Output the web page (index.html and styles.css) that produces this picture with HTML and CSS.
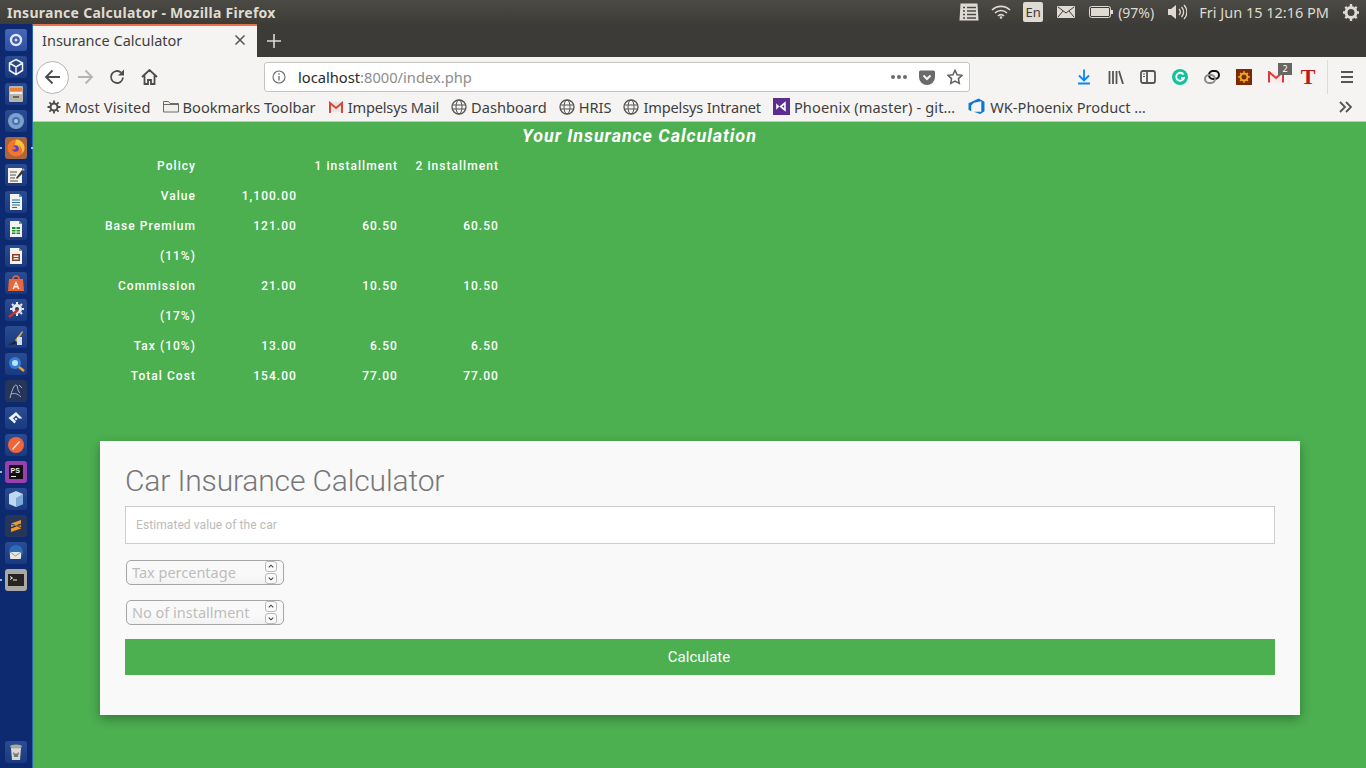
FILE: index.html
```html
<!DOCTYPE html>
<html lang="en">
<head>
  <meta charset="UTF-8">
  <title>Insurance Calculator</title>
  <link rel="stylesheet" href="styles.css">
</head>
<body>
  <div class="panel">
    <div class="panel-title">Insurance Calculator - Mozilla Firefox</div>
    <div class="panel-tray">
      <svg class="tray-icon" width="20" height="18" viewBox="0 0 20 18"><path d="M1.500 0.500h17l1 17H0.500z" fill="#dfdbd2"/><path d="M4 4.500h2M8 4.500h9M4 8h2M8 8h9M4 11.500h2M8 11.500h9M4 15h2M8 15h9" stroke="#4a4944" stroke-width="1.500"/></svg>
      <svg class="tray-icon" width="20" height="14" viewBox="0 0 20 14"><path d="M1 5a13 13 0 0 1 18 0M4 8a8.500 8.500 0 0 1 12 0M7 11a4 4 0 0 1 6 0" fill="none" stroke="#dfdbd2" stroke-width="1.600"/><circle cx="10" cy="12.500" r="1.300" fill="#dfdbd2"/></svg>
      <span class="lang-badge">En</span>
      <svg class="tray-icon tray-mail" width="18" height="12" viewBox="0 0 18 12"><rect width="18" height="12" rx="1" fill="#dfdbd2"/><path d="M1 1l8 6 8-6M1 11l5-6M17 11l-5-6" fill="none" stroke="#3c3b37" stroke-width="1"/></svg>
      <svg class="tray-icon battery" width="24" height="12" viewBox="0 0 24 12"><rect x="0.500" y="0.500" width="21" height="11" rx="2" fill="#3c3b37" stroke="#dfdbd2"/><rect x="2" y="2" width="18" height="8" fill="#dfdbd2"/><rect x="22" y="4" width="2" height="4" fill="#dfdbd2"/></svg>
      <span class="tray-text percent">(97%)</span>
      <svg class="tray-icon" width="20" height="16" viewBox="0 0 20 16"><path d="M1 5h3l5-4v14l-5-4H1z" fill="#dfdbd2"/><path d="M12 5a4 4 0 0 1 0 6M14.500 3a7 7 0 0 1 0 10M17 1a10 10 0 0 1 0 14" fill="none" stroke="#dfdbd2" stroke-width="1.300"/></svg>
      <span class="tray-text clock">Fri Jun 15 12:16 PM</span>
      <svg class="tray-icon" width="18" height="18" viewBox="0 0 18 18"><circle cx="9" cy="9.500" r="5" fill="none" stroke="#dfdbd2" stroke-width="3"/><path d="M9 1v3.500M9 14.500V18M1 9.500h3M14 9.500h3M3.300 3.800l2.200 2.200M14.700 3.800l-2.200 2.200M3.300 15.200l2.200-2.200M14.700 15.200l-2.200-2.200" stroke="#dfdbd2" stroke-width="2.400"/></svg>
    </div>
  </div>

  <div class="desktop">
    <div class="launcher">
      <div class="launcher-list">
        <div class="tile tile-bright"><svg width="16" height="16" viewBox="0 0 16 16"><circle cx="8" cy="8" r="5" fill="none" stroke="#dfe5f4" stroke-width="2.400"/><circle cx="8" cy="8" r="1.500" fill="#dfe5f4"/></svg></div>
        <div class="tile"><svg width="18" height="18" viewBox="0 0 18 18"><path d="M9 1.500l6.500 3.500v7.500L9 16.500l-6.500-4V5zM2.500 5L9 9l6.500-4M9 9v7.500" fill="none" stroke="#f0f0f0" stroke-width="1.500"/></svg></div>
        <div class="tile"><svg width="18" height="18" viewBox="0 0 18 18"><rect x="2" y="1" width="14" height="16" rx="1" fill="#b9b5ad"/><rect x="3" y="3" width="12" height="3" fill="#e9803a"/><rect x="3" y="7" width="12" height="2" fill="#f2efe8"/><rect x="6" y="11" width="6" height="2" fill="#6c6860"/></svg></div>
        <div class="tile"><svg width="18" height="18" viewBox="0 0 18 18"><circle cx="9" cy="9" r="8" fill="#7f9ec8"/><circle cx="9" cy="9" r="4" fill="#3f74bd"/><circle cx="9" cy="9" r="2" fill="#a9c6e6"/></svg></div>
        <div class="tile tile-active"><span class="pip pip-left"></span><span class="pip pip-right"></span><svg width="18" height="18" viewBox="0 0 18 18"><circle cx="9" cy="9" r="8.500" fill="#f5752b"/><path d="M9 .5a8.500 8.500 0 0 1 8.500 8.500c0 2-1 4-2.500 5.500 1-4-1-7.500-4-8.500l2 3H7L9 .5z" fill="#fcc13a"/><circle cx="8.500" cy="9.500" r="3.300" fill="#5b3fc9"/><path d="M5 7c2 0 3 1 4 2-1 2-2 2-4 1z" fill="#f5752b"/></svg></div>
        <div class="tile"><svg width="18" height="18" viewBox="0 0 18 18"><rect x="1" y="2" width="14" height="15" fill="#f3f1ea"/><path d="M3 6h7M3 9h6M3 12h5M3 15h8" stroke="#55534e"/><path d="M9 12l6-8 2 2-7 7z" fill="#3a3733"/><path d="M15 4l1-2 2 2-2 1z" fill="#c889b8"/></svg></div>
        <div class="tile"><svg width="18" height="18" viewBox="0 0 18 18"><path d="M3 1h9l3 3v13H3z" fill="#f2f2f0"/><path d="M12 1l3 3h-3z" fill="#3f9bd0"/><path d="M5 7h8M5 9.500h8M5 12h8M5 14.500h5" stroke="#2a6d9e" stroke-width="1.200"/></svg></div>
        <div class="tile"><svg width="18" height="18" viewBox="0 0 18 18"><path d="M3 1h9l3 3v13H3z" fill="#f2f2f0"/><path d="M12 1l3 3h-3z" fill="#5bb13f"/><rect x="5" y="7" width="8" height="7" fill="#1d8a2b"/><path d="M5 9.500h8M5 12h8M9 7v7" stroke="#f2f2f0"/></svg></div>
        <div class="tile"><svg width="18" height="18" viewBox="0 0 18 18"><path d="M3 1h9l3 3v13H3z" fill="#f2f2f0"/><path d="M12 1l3 3h-3z" fill="#d2773a"/><rect x="5" y="7" width="8" height="7" fill="#8a3f1e"/><rect x="6.500" y="8.500" width="5" height="1.500" fill="#f2f2f0"/><rect x="6.500" y="11" width="5" height="1.500" fill="#f2f2f0"/></svg></div>
        <div class="tile"><svg width="18" height="18" viewBox="0 0 18 18"><path d="M2 5h14l1 12H1z" fill="#e8673a"/><path d="M6 5a3 3 0 0 1 6 0" fill="none" stroke="#e8673a" stroke-width="1.500"/><path d="M9 7l3.500 8H11l-.6-1.600H7.600L7 15H5.500zM8.100 12h1.800L9 9.700z" fill="#f8f2ec"/></svg></div>
        <div class="tile"><svg width="18" height="18" viewBox="0 0 18 18"><circle cx="10" cy="8" r="5" fill="#e8e8e6"/><circle cx="10" cy="8" r="2" fill="#26365a"/><path d="M10 1v2M10 13v2M3 8h2M15 8h2M5 3l1.500 1.500M15 3l-1.500 1.500M15 13l-1.500-1.500" stroke="#e8e8e6" stroke-width="2"/><path d="M2 16l9-7" stroke="#c9322c" stroke-width="2.500"/></svg></div>
        <div class="tile"><svg width="18" height="18" viewBox="0 0 18 18"><path d="M1 16c3 0 5-1 6-3l2 2c-2 2-5 2-8 1z" fill="#20201e"/><path d="M8 12l7-9 1 1-6 10z" fill="#d8a34a"/><rect x="10" y="9" width="5" height="8" fill="#cfdcef"/></svg></div>
        <div class="tile"><svg width="18" height="18" viewBox="0 0 18 18"><circle cx="8" cy="8" r="6" fill="#2f7fd6"/><circle cx="8" cy="8" r="3" fill="#bfe0f8"/><path d="M12 12l5 4" stroke="#f0a030" stroke-width="2.500"/></svg></div>
        <div class="tile tile-dark"><svg width="18" height="18" viewBox="0 0 18 18"><path d="M3 16C5 8 7 3 9 3s1 6 4 8M4 12c3-1 6-1 10 3M12 3l3 3" fill="none" stroke="#a9b4c2" stroke-width="1"/></svg></div>
        <div class="tile"><svg width="18" height="18" viewBox="0 0 18 18"><path d="M9 3l6.500 6.500H12L9 6.500 6 9.500l3 3-1.500 2L1.500 9zM9 8.500l1.500 1.500-1.500 1.500L7.500 10z" fill="#eef2f8" fill-rule="evenodd"/></svg></div>
        <div class="tile"><svg width="18" height="18" viewBox="0 0 18 18"><circle cx="9" cy="9" r="8" fill="#f0653a"/><path d="M5 13l7-8 1 1-7 8z" fill="#fbe8dc"/></svg></div>
        <div class="tile tile-ps"><span class="pip pip-left"></span><svg width="18" height="18" viewBox="0 0 18 18"><rect x="2" y="2" width="14" height="14" fill="#111"/><rect x="4" y="13" width="5" height="1" fill="#f0f0f0"/><text x="3.500" y="10" class="ps-mark">PS</text></svg></div>
        <div class="tile"><svg width="18" height="18" viewBox="0 0 18 18"><path d="M9 1l7 3v10l-7 3-7-3V4z" fill="#c2d8ee"/><path d="M9 8l7-4v10l-7 3z" fill="#7da9d6"/></svg></div>
        <div class="tile tile-dark"><svg width="18" height="18" viewBox="0 0 18 18"><path d="M4 6.500L14 3v3.500L4 10zM4 7.500l10 3.500v-1L4 6.500zM4 11.500L14 8v3.500L4 15z" fill="#f09a2a"/></svg></div>
        <div class="tile"><svg width="18" height="18" viewBox="0 0 18 18"><circle cx="9" cy="8" r="7" fill="#2a6db8"/><rect x="3" y="8" width="11" height="7" rx="1" fill="#e6e6e2"/><path d="M3 8l5.500 4L14 8" fill="none" stroke="#9a9a94"/></svg></div>
        <div class="tile tile-term"><span class="pip pip-left"></span><svg width="18" height="18" viewBox="0 0 18 18"><rect x="1" y="3" width="16" height="12" fill="#26251f"/><path d="M3 5.500l2.500 1.500L3 8.500" fill="none" stroke="#f0f0f0"/><path d="M6 9h4" stroke="#f0f0f0"/></svg></div>
      </div>
      <div class="tile tile-trash"><svg width="18" height="18" viewBox="0 0 18 18"><path d="M4 5h10l-1 12H5z" fill="#d9d8d2"/><ellipse cx="9" cy="3.500" rx="6" ry="2" fill="#a9a8a2"/><path d="M6 9l3 2 3-2-1 5H7z" fill="#7a7974"/></svg></div>
    </div>

    <div class="browser">
      <div class="tabstrip">
        <div class="tab">
          <span class="tab-title">Insurance Calculator</span>
          <svg width="10" height="10" viewBox="0 0 10 10"><path d="M0.500 0.500l9 9M9.500 0.500l-9 9" stroke="#55534e" stroke-width="1.500"/></svg>
        </div>
        <svg class="new-tab" width="14" height="14" viewBox="0 0 14 14"><path d="M7 0v14M0 7h14" stroke="#dcdad5" stroke-width="1.600"/></svg>
      </div>

      <div class="navbar">
        <div class="back-btn"><svg width="17" height="16" viewBox="0 0 17 16"><path d="M16 8H2M8.500 1.500L2 8l6.500 6.500" fill="none" stroke="#4c4c4a" stroke-width="1.800"/></svg></div>
        <svg class="nav-forward" width="17" height="16" viewBox="0 0 17 16"><path d="M1 8h14M8.500 1.500L15 8l-6.500 6.500" fill="none" stroke="#b5b4b0" stroke-width="1.800"/></svg>
        <svg class="nav-reload" width="16" height="16" viewBox="0 0 16 16"><path d="M14 8.500A6 6 0 1 1 12 3.500" fill="none" stroke="#4c4c4a" stroke-width="1.800"/><path d="M15 0.500v6h-6z" fill="#4c4c4a"/></svg>
        <svg class="nav-home" width="17" height="16" viewBox="0 0 17 16"><path d="M1 8l7.500-7L16 8M3.500 6.500V15h3.500v-4h3v4h3.500V6.500" fill="none" stroke="#4c4c4a" stroke-width="1.800"/></svg>

        <div class="urlbar">
          <svg width="14" height="14" viewBox="0 0 14 14"><circle cx="7" cy="7" r="6" fill="none" stroke="#6a6a68" stroke-width="1.100"/><path d="M7 6v4.500M7 3.300v1.500" stroke="#6a6a68" stroke-width="1.300"/></svg>
          <span class="url-text">localhost<span class="url-dim">:8000/index.php</span></span>
          <span class="url-dots"><i></i><i></i><i></i></span>
          <svg class="url-pocket" width="16" height="15" viewBox="0 0 16 15"><path d="M1.500 0.500h13A1.500 1.500 0 0 1 16 2v5a8 8 0 0 1-16 0V2A1.500 1.500 0 0 1 1.500 0.500z" fill="#6a6a68"/><path d="M4.500 5.500L8 9l3.500-3.500" fill="none" stroke="#f5f4f2" stroke-width="2"/></svg>
          <svg class="url-star" width="16" height="16" viewBox="0 0 16 16"><path d="M8 1.300l2.100 4.400 4.900.6-3.600 3.300.9 4.800L8 12.100l-4.300 2.300.9-4.800L1 6.300l4.900-.6z" fill="none" stroke="#5e5e5c" stroke-width="1.500"/></svg>
        </div>

        <div class="toolbar-icons">
          <span class="tool"><svg width="14" height="16" viewBox="0 0 14 16"><path d="M7 0.500V11M2 6.500L7 11.500l5-5" fill="none" stroke="#0a84ff" stroke-width="1.800"/><path d="M1 14.500h12" stroke="#0a84ff" stroke-width="2"/></svg></span>
          <span class="tool"><svg width="16" height="14" viewBox="0 0 16 14"><path d="M1.500 1v13M5 1v13M8.500 1v13M11 1l4 13" fill="none" stroke="#555553" stroke-width="1.800"/></svg></span>
          <span class="tool"><svg width="16" height="14" viewBox="0 0 16 14"><rect x="1" y="1" width="14" height="12" rx="2" fill="none" stroke="#555553" stroke-width="1.800"/><path d="M7 1v12" stroke="#555553" stroke-width="1.800"/><path d="M3 4h2M3 6.500h2" stroke="#555553"/></svg></span>
          <span class="tool"><svg width="16" height="16" viewBox="0 0 16 16"><circle cx="8" cy="8" r="8" fill="#15c39a"/><path d="M11.500 5.500A4 4 0 1 0 12 9H9" fill="none" stroke="#fff" stroke-width="1.800"/></svg></span>
          <span class="tool"><svg width="16" height="14" viewBox="0 0 16 14"><rect x="5" y="1" width="10" height="8" rx="4" fill="none" stroke="#111" stroke-width="2"/><rect x="1" y="5" width="10" height="8" rx="4" fill="none" stroke="#8a8a88" stroke-width="2"/></svg></span>
          <span class="tool"><svg width="16" height="16" viewBox="0 0 16 16"><rect width="16" height="16" fill="#7a2a05"/><circle cx="8" cy="8" r="3.500" fill="none" stroke="#f0a81e" stroke-width="2"/><path d="M8 2v2M8 12v2M2 8h2M12 8h2M4 4l1.500 1.500M12 4l-1.500 1.500M4 12l1.500-1.500M12 12l-1.500-1.500" stroke="#f0a81e" stroke-width="1.300"/></svg></span>
          <span class="tool gmail-btn">
            <svg width="16" height="12" viewBox="0 0 16 12"><rect x="0.500" y="0.500" width="15" height="11" fill="#fbeaea"/><path d="M1 11.500V1l7 6 7-6v10.500" fill="none" stroke="#e0393a" stroke-width="2"/></svg>
            <span class="count-badge">2</span>
          </span>
          <span class="tool t-icon">T</span>
          <span class="tool-sep"></span>
          <span class="tool"><svg width="14" height="12" viewBox="0 0 14 12"><path d="M1 1h12M1 6h12M1 11h12" stroke="#555553" stroke-width="1.800"/></svg></span>
        </div>
      </div>

      <div class="bookmarks">
        <span class="bm bm-wide"><svg class="bm-gear" width="14" height="14" viewBox="0 0 14 14"><circle cx="7" cy="7" r="3.500" fill="none" stroke="#4c4c4a" stroke-width="2"/><path d="M7 0.500v2.500M7 11v2.500M0.500 7H3M11 7h2.500M2.400 2.400l1.800 1.800M11.600 2.400L9.800 4.200M2.400 11.600l1.800-1.800M11.600 11.600L9.800 9.800" stroke="#4c4c4a" stroke-width="1.800"/></svg>Most Visited</span>
        <span class="bm"><svg width="16" height="13" viewBox="0 0 16 13"><path d="M0.500 12V1.500h5l1.500 2h8.500V12z" fill="#f1efeb" stroke="#6a6a68"/><path d="M0.500 4.500h15" stroke="#6a6a68"/></svg>Bookmarks Toolbar</span>
        <span class="bm bm-tight"><svg width="16" height="12" viewBox="0 0 16 12"><rect x="1" y="1" width="14" height="10" fill="#e9e7e4"/><path d="M2 12V2l6 5 6-5v10" fill="none" stroke="#d9473b" stroke-width="2"/></svg>Impelsys Mail</span>
        <span class="bm"><svg class="globe" width="16" height="16" viewBox="0 0 16 16"><use href="#globe"/></svg>Dashboard</span>
        <span class="bm"><svg class="globe" width="16" height="16" viewBox="0 0 16 16"><use href="#globe"/></svg>HRIS</span>
        <span class="bm bm-tight"><svg class="globe" width="16" height="16" viewBox="0 0 16 16"><use href="#globe"/></svg>Impelsys Intranet</span>
        <span class="bm bm-wide"><svg width="17" height="17" viewBox="0 0 16 16"><rect width="16" height="16" fill="#5c2d91"/><path d="M3 5l3 3-3 3zM6 8l6-5v10zM8.500 8l2 1.500v-3z" fill="#fff" fill-rule="evenodd"/></svg>Phoenix (master) - git…</span>
        <span class="bm bm-last"><svg width="17" height="17" viewBox="0 0 16 16"><path d="M15.500 3.500v9l-4 2.500-6-2h7V3l-7 1.500L3 7v5.500L.5 11V5L10 .5z" fill="#0a78d4"/></svg>WK-Phoenix Product …</span>
        <svg class="bm-more" width="13" height="12" viewBox="0 0 13 12"><path d="M1 1l5 5-5 5M7 1l5 5-5 5" fill="none" stroke="#555553" stroke-width="1.800"/></svg>
      </div>

      <svg class="svg-defs" width="0" height="0"><symbol id="globe" viewBox="0 0 16 16"><circle cx="8" cy="8" r="7" fill="none" stroke="#555553" stroke-width="1.300"/><ellipse cx="8" cy="8" rx="3" ry="7" fill="none" stroke="#555553"/><path d="M1 6h14M1 10h14" stroke="#555553"/></symbol></svg>

      <main class="page">
        <h3 class="result-title">Your Insurance Calculation</h3>
        <table class="result-table">
          <tr><th>Policy</th><td></td><td>1 installment</td><td>2 installment</td></tr>
          <tr><th>Value</th><td>1,100.00</td><td></td><td></td></tr>
          <tr><th>Base Premium</th><td>121.00</td><td>60.50</td><td>60.50</td></tr>
          <tr><th>(11%)</th><td></td><td></td><td></td></tr>
          <tr><th>Commission</th><td>21.00</td><td>10.50</td><td>10.50</td></tr>
          <tr><th>(17%)</th><td></td><td></td><td></td></tr>
          <tr><th>Tax (10%)</th><td>13.00</td><td>6.50</td><td>6.50</td></tr>
          <tr><th>Total Cost</th><td>154.00</td><td>77.00</td><td>77.00</td></tr>
        </table>

        <form class="calc-card">
          <h2 class="calc-title">Car Insurance Calculator</h2>
          <input class="value-input" type="text" placeholder="Estimated value of the car">
          <div class="num-field">
            <input type="text" placeholder="Tax percentage">
            <span class="spin"><svg viewBox="0 0 10 10"><path d="M2.500 6L5 3.500 7.500 6" fill="none" stroke="#444" stroke-width="1.200"/></svg><svg viewBox="0 0 10 10"><path d="M2.500 4L5 6.500 7.500 4" fill="none" stroke="#444" stroke-width="1.200"/></svg></span>
          </div>
          <div class="num-field">
            <input type="text" placeholder="No of installment">
            <span class="spin"><svg viewBox="0 0 10 10"><path d="M2.500 6L5 3.500 7.500 6" fill="none" stroke="#444" stroke-width="1.200"/></svg><svg viewBox="0 0 10 10"><path d="M2.500 4L5 6.500 7.500 4" fill="none" stroke="#444" stroke-width="1.200"/></svg></span>
          </div>
          <button class="calc-btn" type="button">Calculate</button>
        </form>
      </main>
    </div>
  </div>
</body>
</html>
```

FILE: styles.css
```css
* {
  box-sizing: border-box;
}
html, body {
  margin: 0;
  height: 100%;
  overflow: hidden;
}
body {
  font-family: "Noto Sans", sans-serif;
  background: #4caf50;
}

/* ubuntu top panel */
.panel {
  height: 24px;
  background: linear-gradient(#4b4a45, #3d3c37);
  color: #dfdbd2;
  display: flex;
  align-items: center;
  justify-content: space-between;
  padding: 0 6px 0 7px;
}
.panel-title {
  font-size: 14px;
  font-weight: 700;
  letter-spacing: 0.28px;
}
.panel-tray {
  display: flex;
  align-items: center;
}
.tray-icon {
  display: block;
}
.panel-tray .tray-icon {
  margin-right: 12px;
}
.panel-tray .tray-mail {
  margin-right: 14px;
}
.panel-tray .battery {
  margin-right: 5px;
}
.panel-tray .tray-icon:last-child {
  margin-right: 0;
}
.lang-badge {
  width: 20px;
  height: 20px;
  margin-right: 14px;
  background: #dfdbd2;
  color: #3c3b37;
  border-radius: 2px;
  font-size: 13px;
  text-align: center;
  line-height: 20px;
}
.tray-text {
  font-size: 14px;
  color: #dfdbd2;
}
.percent {
  margin-right: 13px;
}
.clock {
  margin-right: 13px;
  font-size: 14.500px;
}

.desktop {
  display: flex;
  height: 744px;
}

/* launcher */
.launcher {
  width: 33px;
  flex: none;
  background: #0d2a70;
  border-right: 1px solid #2b64b4;
  padding: 5px 0 5px 5px;
  display: flex;
  flex-direction: column;
  justify-content: space-between;
}
.launcher-list {
  display: flex;
  flex-direction: column;
  gap: 5px;
}
.tile {
  position: relative;
  width: 22px;
  height: 22px;
  border-radius: 3px;
  background: linear-gradient(#2a4c92, #193a80);
  display: flex;
  align-items: center;
  justify-content: center;
}
.tile-bright {
  background: linear-gradient(#4467b8, #2f509f);
}
.tile-active {
  background: #a8673f;
}
.tile-dark {
  background: #26365a;
}
.tile-ps {
  background: #9a3fb0;
}
.tile-term {
  background: #a9a8a4;
}
.pip {
  position: absolute;
  top: 10px;
  width: 2px;
  height: 2px;
  border-radius: 50%;
  background: #dfe5f4;
}
.pip-left {
  left: -5px;
}
.pip-right {
  right: -6px;
}
.ps-mark {
  font-family: "Liberation Sans", sans-serif;
  font-size: 7px;
  font-weight: 700;
  fill: #f0f0f0;
}

/* firefox window */
.browser {
  flex: 1;
  display: flex;
  flex-direction: column;
  min-width: 0;
}
.tabstrip {
  height: 33px;
  background: #3c3b37;
  display: flex;
  align-items: center;
}
.tab {
  width: 224px;
  height: 33px;
  background: #f5f4f2;
  border-top: 2px solid #e9724a;
  display: flex;
  align-items: center;
  justify-content: space-between;
  padding: 0 12px 3px 9px;
}
.tab-title {
  font-size: 14.500px;
  color: #3f3f3d;
}
.new-tab {
  margin-left: 10px;
}
.navbar {
  height: 40px;
  background: #f5f4f2;
  display: flex;
  align-items: center;
  padding-left: 3px;
}
.back-btn {
  width: 33px;
  height: 33px;
  flex: none;
  border-radius: 50%;
  border: 1px solid #b5b4b0;
  background: #fff;
  display: flex;
  align-items: center;
  justify-content: center;
}
.nav-forward {
  margin-left: 8px;
}
.nav-reload {
  margin-left: 15px;
}
.nav-home {
  margin-left: 16px;
}
.urlbar {
  width: 706px;
  height: 30px;
  flex: none;
  margin-left: 106px;
  background: #fff;
  border: 1px solid #c5c4c0;
  border-radius: 3px;
  display: flex;
  align-items: center;
  padding: 0 6px 0 7px;
}
.url-text {
  margin-left: 12px;
  flex: 1;
  font-size: 14.700px;
  color: #2a2a28;
}
.url-dim {
  color: #8d8d8b;
}
.url-dots {
  display: flex;
  gap: 2px;
}
.url-dots i {
  width: 4px;
  height: 4px;
  border-radius: 50%;
  background: #6a6a68;
}
.url-pocket {
  margin-left: 12px;
}
.url-star {
  margin-left: 12px;
}
.toolbar-icons {
  flex: 1;
  display: flex;
  align-items: center;
  padding-left: 98px;
}
.tool {
  width: 32px;
  height: 24px;
  flex: none;
  display: flex;
  align-items: center;
  justify-content: center;
  position: relative;
}
.count-badge {
  position: absolute;
  left: 18px;
  top: -2px;
  width: 14px;
  height: 12px;
  background: #666664;
  color: #fff;
  font-size: 9px;
  line-height: 12px;
  text-align: center;
}
.t-icon {
  font-family: "Liberation Serif", serif;
  font-size: 22px;
  font-weight: 700;
  line-height: 24px;
  color: #c01818;
}
.tool-sep {
  width: 1px;
  height: 34px;
  flex: none;
  background: #dcdbd7;
  margin: 0 3px;
}
.bookmarks {
  height: 25px;
  background: #f5f4f2;
  border-bottom: 1px solid #c4c3bf;
  display: flex;
  align-items: center;
  padding: 0 0 5px 14px;
}
.bm {
  display: flex;
  align-items: center;
  gap: 4px;
  margin-right: 12px;
  font-size: 14.600px;
  color: #3f3f3d;
  white-space: nowrap;
}
.bm-wide {
  letter-spacing: 0.14px;
}
.bm-tight {
  letter-spacing: -0.18px;
}
.bm-last {
  margin-left: 1px;
  gap: 5px;
}
.bm-more {
  margin-left: auto;
  margin-right: 14px;
}
.svg-defs {
  position: absolute;
}

/* page content */
.page {
  flex: 1;
  background: #4caf50;
  color: #fff;
  font-family: Roboto, sans-serif;
  overflow: hidden;
}
.result-title {
  margin: 4px 0 0 489px;
  font-size: 18px;
  font-weight: 700;
  font-style: italic;
  letter-spacing: 0.92px;
  line-height: 20px;
}
.result-table {
  border-collapse: collapse;
  margin: 5px 0 0 62px;
  font-size: 12px;
  font-weight: 500;
  letter-spacing: 1.05px;
}
.result-table th,
.result-table td {
  width: 101px;
  height: 30px;
  padding: 0;
  text-align: right;
  font-weight: 500;
}
.calc-card {
  width: 1200px;
  height: 274px;
  margin: 50px 0 0 67px;
  padding: 24px 25px 25px;
  background: #f9f9f9;
  box-shadow: 0 4px 10px rgba(0, 0, 0, 0.3);
}
.calc-title {
  margin: 0 0 9px;
  font-size: 30px;
  font-weight: 300;
  line-height: 32px;
  letter-spacing: -0.15px;
  color: #777;
}
.value-input {
  display: block;
  width: 100%;
  height: 38px;
  padding: 0 10px;
  background: #fff;
  border: 1px solid #ccc;
  border-radius: 0;
  font-family: Roboto, sans-serif;
  font-size: 12px;
  letter-spacing: 0.08px;
}
.value-input::placeholder {
  color: #bbb;
  opacity: 1;
}
.num-field {
  width: 158px;
  height: 25px;
  margin: 16px 0 0 1px;
  border: 1px solid #a5a5a5;
  border-radius: 5px;
  background: linear-gradient(#f9f9f9 60%, #f2f2f2);
  display: flex;
  align-items: center;
}
.num-field + .num-field {
  margin-top: 15px;
}
.num-field input {
  flex: 1;
  min-width: 0;
  border: 0;
  outline: 0;
  background: transparent;
  padding: 0 0 2px 5px;
  font-family: "Noto Sans", sans-serif;
  font-size: 14.500px;
}
.num-field input::placeholder {
  color: #bdbdbd;
  opacity: 1;
}
.spin {
  display: flex;
  flex-direction: column;
  gap: 1px;
  margin-right: 6px;
}
.spin svg {
  display: block;
  width: 12px;
  height: 11px;
  border: 1px solid #bbb;
  border-radius: 3px;
  background: #fafafa;
}
.calc-btn {
  display: block;
  width: 100%;
  height: 36px;
  margin-top: 14px;
  border: 0;
  padding: 0 2px 0 0;
  background: #4caf50;
  color: #fff;
  font-family: Roboto, sans-serif;
  font-size: 15px;
}
```
